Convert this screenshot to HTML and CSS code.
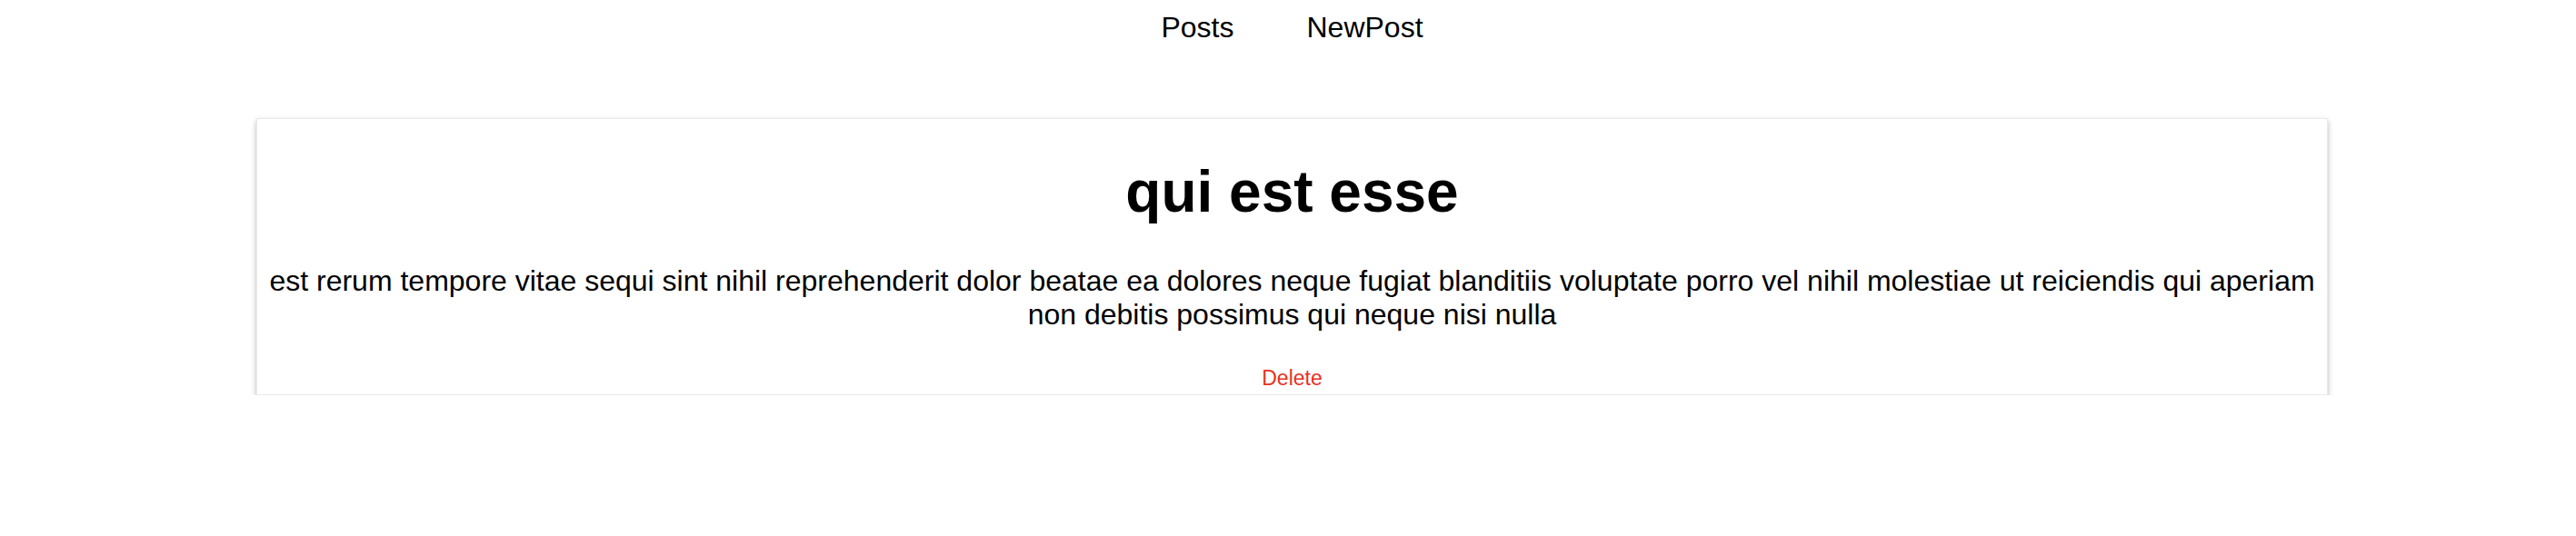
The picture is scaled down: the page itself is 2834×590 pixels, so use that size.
FILE: index.html
```html
<!DOCTYPE html>
<html>
<head>
<meta charset="utf-8">
<link rel="stylesheet" href="styles.css">
</head>
<body>
<nav class="nav">
  <a class="nav-link" href="#">Posts</a>
  <a class="nav-link" href="#">NewPost</a>
</nav>
<main class="list">
  <article class="card">
    <h1 class="card-title">qui est esse</h1>
    <p class="card-body">est rerum tempore vitae sequi sint nihil reprehenderit dolor beatae ea dolores neque fugiat blanditiis voluptate porro vel nihil molestiae ut reiciendis qui aperiam non debitis possimus qui neque nisi nulla</p>
    <div class="card-actions"><button class="delete">Delete</button></div>
  </article>
</main>
</body>
</html>
```

FILE: styles.css
```css
html, body {
  margin: 0;
  background: #fff;
}
body {
  padding: 0 0 0 9px;
  font-family: "Liberation Sans", Arial, Helvetica, sans-serif;
  color: #000;
}
.nav {
  display: flex;
  justify-content: center;
  gap: 80px;
  padding-top: 12px;
  font-size: 32px;
}
.nav-link {
  color: #000;
  text-decoration: none;
}
.list {
  padding-top: 81px;
}
.card {
  width: 2279px;
  box-sizing: border-box;
  margin: 0 auto;
  border: 1px solid #e9e9e9;
  box-shadow: 0 3px 6px rgba(0, 0, 0, 0.28);
  padding: 0 8px;
  text-align: center;
}
.card-title {
  font-size: 64px;
  font-weight: bold;
  margin: 43px 0;
}
.card-body {
  font-size: 32px;
  margin: 43px 0 32px;
}
.card-actions {
  display: flex;
  justify-content: center;
}
.delete {
  background: none;
  border: none;
  padding: 6px 10px 4px;
  font-family: "Liberation Sans", Arial, sans-serif;
  font-size: 23px;
  color: #e8311f;
  cursor: pointer;
}
```
